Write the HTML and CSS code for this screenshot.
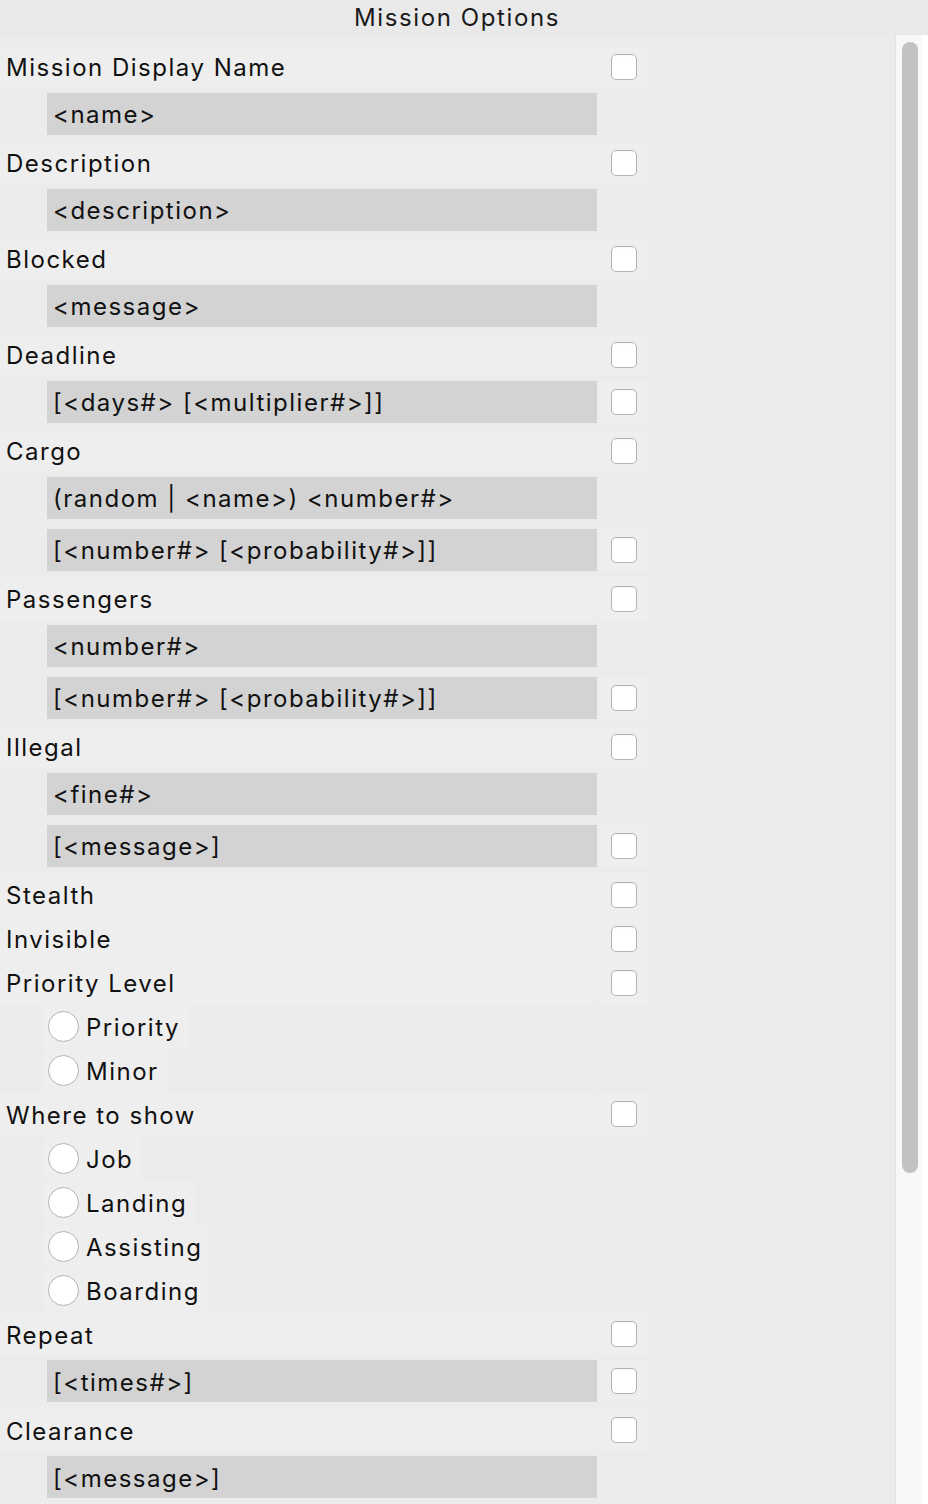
FILE: index.html
```html
<!DOCTYPE html>
<html>
<head>
<meta charset="utf-8">
<link rel="stylesheet" href="styles.css">
</head>
<body>
<div class="header"><span class="title">Mission Options</span></div>
<div class="main">
  <div class="content">
    <div class="row label-row"><div class="cell">Mission Display Name</div><div class="check-cell"><span class="checkbox"></span></div></div>
    <div class="row field-row"><div class="field">&lt;name&gt;</div></div>
    <div class="row label-row"><div class="cell">Description</div><div class="check-cell"><span class="checkbox"></span></div></div>
    <div class="row field-row"><div class="field">&lt;description&gt;</div></div>
    <div class="row label-row"><div class="cell">Blocked</div><div class="check-cell"><span class="checkbox"></span></div></div>
    <div class="row field-row"><div class="field">&lt;message&gt;</div></div>
    <div class="row label-row"><div class="cell">Deadline</div><div class="check-cell"><span class="checkbox"></span></div></div>
    <div class="row field-row"><div class="field">[&lt;days#&gt; [&lt;multiplier#&gt;]]</div><div class="check-cell"><span class="checkbox"></span></div></div>
    <div class="row label-row"><div class="cell">Cargo</div><div class="check-cell"><span class="checkbox"></span></div></div>
    <div class="row field-row"><div class="field">(random | &lt;name&gt;) &lt;number#&gt;</div></div>
    <div class="row field-row"><div class="field">[&lt;number#&gt; [&lt;probability#&gt;]]</div><div class="check-cell"><span class="checkbox"></span></div></div>
    <div class="row label-row"><div class="cell">Passengers</div><div class="check-cell"><span class="checkbox"></span></div></div>
    <div class="row field-row"><div class="field">&lt;number#&gt;</div></div>
    <div class="row field-row"><div class="field">[&lt;number#&gt; [&lt;probability#&gt;]]</div><div class="check-cell"><span class="checkbox"></span></div></div>
    <div class="row label-row"><div class="cell">Illegal</div><div class="check-cell"><span class="checkbox"></span></div></div>
    <div class="row field-row"><div class="field">&lt;fine#&gt;</div></div>
    <div class="row field-row"><div class="field">[&lt;message&gt;]</div><div class="check-cell"><span class="checkbox"></span></div></div>
    <div class="row label-row"><div class="cell">Stealth</div><div class="check-cell"><span class="checkbox"></span></div></div>
    <div class="row label-row"><div class="cell">Invisible</div><div class="check-cell"><span class="checkbox"></span></div></div>
    <div class="row label-row"><div class="cell">Priority Level</div><div class="check-cell"><span class="checkbox"></span></div></div>
    <div class="row radio-row"><div class="radio-cell"><span class="radio"></span><span class="radio-text">Priority</span></div></div>
    <div class="row radio-row"><div class="radio-cell"><span class="radio"></span><span class="radio-text">Minor</span></div></div>
    <div class="row label-row"><div class="cell">Where to show</div><div class="check-cell"><span class="checkbox"></span></div></div>
    <div class="row radio-row"><div class="radio-cell"><span class="radio"></span><span class="radio-text">Job</span></div></div>
    <div class="row radio-row"><div class="radio-cell"><span class="radio"></span><span class="radio-text">Landing</span></div></div>
    <div class="row radio-row"><div class="radio-cell"><span class="radio"></span><span class="radio-text">Assisting</span></div></div>
    <div class="row radio-row"><div class="radio-cell"><span class="radio"></span><span class="radio-text">Boarding</span></div></div>
    <div class="row label-row"><div class="cell">Repeat</div><div class="check-cell"><span class="checkbox"></span></div></div>
    <div class="row field-row"><div class="field">[&lt;times#&gt;]</div><div class="check-cell"><span class="checkbox"></span></div></div>
    <div class="row label-row"><div class="cell">Clearance</div><div class="check-cell"><span class="checkbox"></span></div></div>
    <div class="row field-row"><div class="field">[&lt;message&gt;]</div></div>
  </div>
  <div class="scrollbar"><div class="thumb"></div></div>
  <div class="edge"></div>
</div>
</body>
</html>
```

FILE: styles.css
```css
html, body {
  margin: 0;
  padding: 0;
}
body {
  width: 928px;
  height: 1504px;
  overflow: hidden;
  background: #ececec;
  font-family: Inter, "Noto Sans", sans-serif;
  font-size: 24px;
  letter-spacing: 1.5px;
  color: #111111;
}
.header {
  height: 35px;
  background: #e9e9e9;
  display: flex;
  align-items: center;
  justify-content: center;
  padding-right: 14px;
}
.title {
  font-size: 24px;
  color: #1a1a1a;
  letter-spacing: 1.6px;
}
.main {
  display: flex;
  height: 1469px;
}
.content {
  width: 895px;
  padding-top: 10px;
  display: flex;
  flex-direction: column;
}
.row {
  display: flex;
  align-items: center;
}
.label-row {
  height: 44px;
}
.label-row .cell {
  width: 597px;
  height: 42px;
  padding: 2px 0 0 6px;
  box-sizing: border-box;
  display: flex;
  align-items: center;
  background: #eeeeee;
}
.check-cell {
  width: 50px;
  height: 42px;
  margin-left: 2px;
  display: flex;
  align-items: center;
  justify-content: center;
  background: #eeeeee;
}
.checkbox {
  width: 24px;
  height: 24px;
  border: 1px solid #b4b4b4;
  border-radius: 5px;
  background: #ffffff;
  box-shadow: inset 0 1px 1px rgba(0,0,0,0.04);
}
.field-row {
  height: 52px;
  padding-top: 4px;
  padding-bottom: 6px;
  box-sizing: border-box;
}
.field {
  margin-left: 47px;
  width: 550px;
  height: 42px;
  padding: 2px 0 0 6px;
  box-sizing: border-box;
  background: #d3d3d3;
  display: flex;
  align-items: center;
}
.radio-row {
  height: 44px;
}
.radio-cell {
  margin-left: 44px;
  height: 42px;
  padding: 0 8px 0 4px;
  display: flex;
  align-items: center;
  gap: 7px;
  background: #eeeeee;
}
.radio-text {
  padding-top: 2px;
}
.radio {
  width: 29px;
  height: 29px;
  border: 1px solid #b4b4b4;
  border-radius: 50%;
  background: #ffffff;
}
.scrollbar {
  width: 27px;
  background: #f8f8f8;
  border-left: 1px solid #e2e2e2;
  box-sizing: border-box;
  padding: 7px 0 0 6px;
}
.thumb {
  width: 16px;
  height: 1131px;
  border-radius: 8px;
  background: #c2c2c2;
}
.edge {
  width: 6px;
  background: #ffffff;
}
```
